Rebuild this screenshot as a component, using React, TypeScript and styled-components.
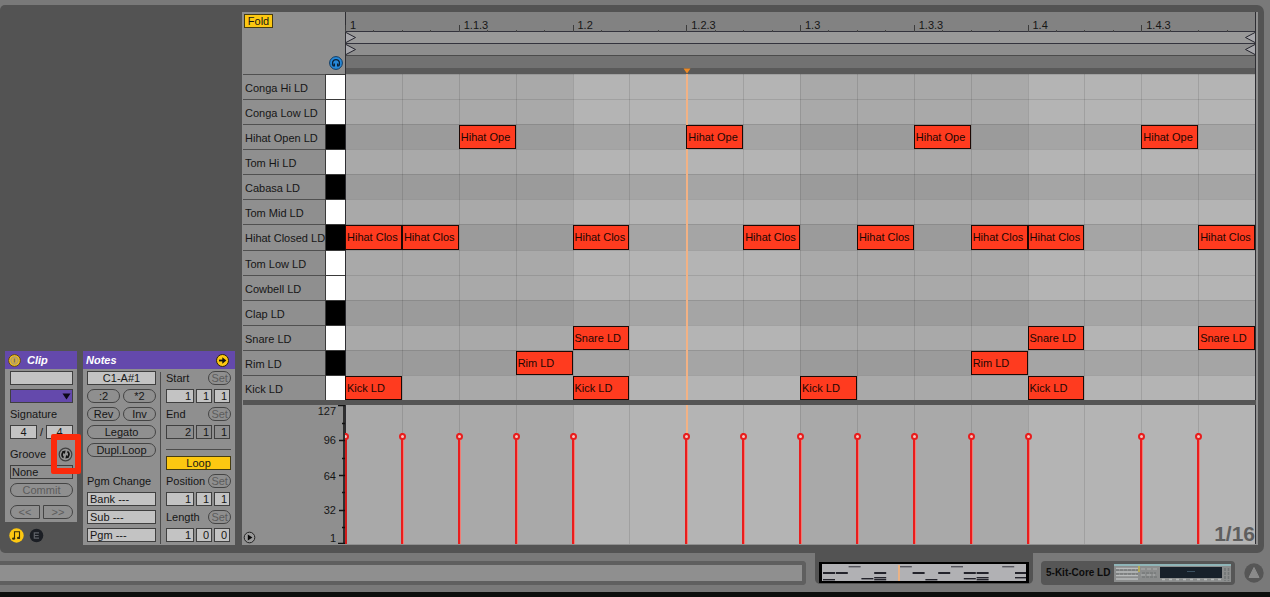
import React from 'react';
import styled, { createGlobalStyle } from 'styled-components';

const GlobalStyle = createGlobalStyle`
  *, *::before, *::after { box-sizing: border-box; }
  body {
    margin: 0;
    background: #0d0f0d;
    color: #161616;
    font: 11px/14px "Liberation Sans", Arial, sans-serif;
  }
  button, input, select { font: inherit; color: inherit; margin: 0; padding: 0; border-radius: 0; }
`;

const LANE_HEIGHT = 326;

const Page = styled.main`
  display: flex;
  flex-direction: column;
  min-width: 900px;
  min-height: 100vh;
  background: #0d0f0d;
`;

const Chassis = styled.div`
  background: #797979;
  padding-top: 5px;
`;

const Detail = styled.section`
  display: flex;
  align-items: flex-end;
  margin-right: 6px;
  padding: 7px 6px 8px 5px;
  background: #535353;
  border-radius: 5px 7px 7px 5px;
`;

/* ---------- clip and notes boxes ---------- */

const Sidebar = styled.aside`
  display: flex;
  flex: none;
  gap: 6px;
  margin-right: 7px;
`;

const ClipColumn = styled.div`
  width: 72px;
`;

const Box = styled.section`
  background: #8f8f8f;
  padding-bottom: 1px;
`;

const NotesBox = styled(Box)`
  width: 152px;
`;

const BoxHeader = styled.header`
  display: flex;
  align-items: center;
  gap: 6px;
  height: 18px;
  padding: 0 6px 0 3px;
  background: #6449ac;
  color: #fff;
`;

const BoxTitle = styled.h2`
  flex: 1;
  margin: 0;
  font-size: 11px;
  font-style: italic;
  font-weight: bold;
`;

const IconButton = styled.button`
  display: block;
  flex: none;
  border: 0;
  background: none;
  line-height: 0;
  svg { display: block; }
`;

const Fields = styled.div`
  padding: 0 4px 0 5px;
`;

const NotesBody = styled.div`
  display: grid;
  grid-template-columns: 69px 1fr;
  padding: 0 5px 0 4px;
`;

const LeftFields = styled.div``;

const RightFields = styled.div`
  margin: 3px 0 0 4px;
  padding-left: 5px;
  border-left: 1px solid #4c4c4c;
  & > :first-child { margin-top: -3px; }
`;

const Row = styled.div<{ $before?: number }>`
  position: relative;
  display: flex;
  align-items: center;
  justify-content: space-between;
  gap: 3px;
  height: 18px;
  margin-top: ${(p) => p.$before ?? 0}px;
`;

const Label = styled.label`
  white-space: nowrap;
`;

const Field = styled.input<{ $align?: string; $dim?: boolean; $w?: number }>`
  height: 14px;
  width: ${(p) => (p.$w ? `${p.$w}px` : '100%')};
  min-width: 0;
  padding: 0 2px;
  border: 1px solid #3f3f3f;
  background: ${(p) => (p.$dim ? '#8f8f8f' : '#c3c3c3')};
  text-align: ${(p) => p.$align ?? 'left'};
  outline: 0;
`;

const Triple = styled.div`
  display: grid;
  grid-template-columns: 28px 16px 16px;
  gap: 2px;
`;

const Pill = styled.button<{ $dim?: boolean; $shape?: string }>`
  flex: 1;
  height: 14px;
  border: 1px solid #444;
  border-radius: ${(p) => p.$shape ?? '7px'};
  background: #8f8f8f;
  color: ${(p) => (p.$dim ? '#5c5c5c' : '#161616')};
  line-height: 12px;
  text-align: center;
`;

const SetButton = styled(Pill)`
  flex: none;
  width: 23px;
`;

const ColorPicker = styled.div`
  position: relative;
  width: 100%;
  height: 14px;
  svg { position: absolute; top: 4px; right: 2px; pointer-events: none; }
`;

const Select = styled.select<{ $color?: string }>`
  display: block;
  width: 100%;
  height: 14px;
  appearance: none;
  border: 1px solid #3f3f3f;
  background: ${(p) => p.$color ?? '#8f8f8f'};
  padding: 0 1px;
  line-height: 12px;
  outline: 0;
`;

const Rule = styled.hr`
  height: 1px;
  margin: 8px 0 6px;
  border: 0;
  background: #4c4c4c;
`;

const YellowButton = styled.button`
  display: block;
  width: 100%;
  height: 14px;
  border: 1px solid #463c10;
  background: #fdc811;
  line-height: 12px;
  text-align: center;
`;

const Highlight = styled.div`
  position: absolute;
  z-index: 2;
  top: -11px;
  right: -8px;
  width: 30px;
  height: 40px;
  border: 6px solid #fb2a0b;
  border-radius: 2px;
  pointer-events: none;
`;

const Toggles = styled.div`
  display: flex;
  gap: 5px;
  padding: 6px 4px 1px;
`;

/* ---------- note editor ---------- */

const Editor = styled.section`
  flex: 1;
  min-width: 0;
  display: grid;
  grid-template-columns: 102px minmax(0, 1fr);
  padding: 0 2px 1px 1px;
  background: #8f8f8f;
`;

const EditorCorner = styled.div`
  display: flex;
  flex-direction: column;
  align-items: flex-end;
  justify-content: space-between;
  padding: 2px 2px 4px 1px;
`;

const FoldButton = styled(YellowButton)`
  width: 29px;
  align-self: flex-start;
`;

const Timeline = styled.div`
  border-left: 1px solid #2e2e33;
  border-right: 1px solid #2e2e33;
  background: #828282;
`;

const Ruler = styled.div`
  display: grid;
  grid-template-columns: repeat(8, 1fr);
  height: 19px;
  margin-left: -1px;
`;

const RulerMark = styled.div`
  position: relative;
  padding: 6px 0 0 5px;
  &::before {
    content: '';
    position: absolute;
    left: 0;
    bottom: 0;
    width: 1px;
    height: 7px;
    background: #3c3c3c;
  }
`;

const SmallTicks = styled.div`
  position: absolute;
  left: 0;
  right: 0;
  bottom: 0;
  height: 2px;
  display: grid;
  grid-template-columns: repeat(4, 1fr);
`;

const SmallTick = styled.i`
  border-left: 1px solid #444;
`;

const Lane = styled.div<{ $tone: string }>`
  display: flex;
  justify-content: space-between;
  height: 12px;
  border-top: 1px solid #33333d;
  background: ${(p) => p.$tone};
  svg { display: block; }
`;

const ScrubLane = styled.div`
  height: 19px;
  border-top: 1px solid #4b4b4b;
  border-bottom: 6px solid #5a5a5a;
  background: #727272;
`;

const Keys = styled.div`
  display: grid;
  grid-template-rows: repeat(13, minmax(0, 1fr));
  height: ${LANE_HEIGHT}px;
`;

const Key = styled.div`
  display: grid;
  grid-template-columns: 82px 20px;
`;

const KeyName = styled.span`
  padding: 6px 0 0 2px;
  border-top: 1px solid #505050;
  white-space: nowrap;
  overflow: hidden;
`;

const KeyCap = styled.span<{ $black: boolean }>`
  border: solid #3a3a3a;
  border-width: 1px 0 0 1px;
  background: ${(p) => (p.$black ? '#000' : '#fff')};
`;

const Columns = styled.div<{ $rows: number; $height: number }>`
  position: relative;
  display: grid;
  grid-template-columns: repeat(16, minmax(0, 1fr));
  grid-template-rows: repeat(${(p) => p.$rows}, minmax(0, 1fr));
  height: ${(p) => p.$height}px;
  border-right: 1px solid #2e2e33;
`;

const Step = styled.div<{ $col: number }>`
  grid-column: ${(p) => p.$col};
  grid-row: 1 / -1;
  border-left: 1px solid ${(p) => (p.$col === 1 ? '#2e2e33' : 'rgba(0, 0, 0, 0.11)')};
  background: ${(p) => (Math.floor((p.$col - 1) / 4) % 2 ? '#b4b4b4' : '#a9a9a9')};
`;

const RowShade = styled.div<{ $row: number; $dark: boolean }>`
  grid-column: 1 / -1;
  grid-row: ${(p) => p.$row};
  border-top: 1px solid rgba(0, 0, 0, 0.1);
  background: ${(p) => (p.$dark ? 'rgba(0, 0, 0, 0.08)' : 'transparent')};
`;

const Note = styled.div<{ $row: number; $col: number }>`
  grid-column: ${(p) => p.$col};
  grid-row: ${(p) => p.$row};
  margin: 1px 0 0;
  padding: 4px 0 0 1px;
  border: 1px solid #1c0804;
  background: #ff3b1f;
  color: #1d0703;
  white-space: nowrap;
  overflow: hidden;
  z-index: 1;
`;

const Playhead = styled.div`
  position: relative;
  grid-column: 7;
  grid-row: 1 / -1;
  width: 2px;
  background: #f2b285;
  svg { position: absolute; top: -6px; left: -3px; }
`;

const Divider = styled.div`
  grid-column: 1 / -1;
  height: 5px;
  background: #555;
`;

const Scale = styled.div`
  display: flex;
  align-items: flex-end;
  justify-content: space-between;
  height: 139px;
  & > svg { display: block; }
`;

const Stem = styled.div<{ $col: number }>`
  grid-column: ${(p) => p.$col};
  grid-row: 1;
  width: 7px;
  margin: 28px 0 0 -3px;
  background: linear-gradient(to right, transparent 2px, #e81d1d 2px, #e81d1d 4px, #f27c74 4px, #f27c74 5px, transparent 5px);
  z-index: 1;
  &::before {
    content: '';
    display: block;
    height: 7px;
    border: 2px solid #e81d1d;
    border-radius: 50%;
    background: #f3c6c0;
  }
`;

const FirstEdge = styled(Stem)`
  margin-left: 0;
  width: 4px;
  overflow: hidden;
  background: linear-gradient(to right, #d21b1b 2px, transparent 2px);
  &::before { width: 7px; margin-left: -3px; }
`;

const Quantize = styled.output`
  position: absolute;
  right: 0;
  bottom: 0;
  color: #5e5e5e;
  font-size: 21px;
  font-weight: bold;
  line-height: 20px;
  z-index: 2;
`;

/* ---------- bottom bar ---------- */

const BottomBar = styled.footer`
  display: flex;
  height: 39px;
  padding: 0 6px 8px 0;
  background: #797979;
`;

const Status = styled.div`
  flex: 1;
  height: 24px;
  margin: 8px 9px 0 0;
  border: solid #5f5f5f;
  border-width: 4px 4px 4px 0;
  border-radius: 0 4px 4px 0;
  background: #8f8f8f;
`;

const OverviewTab = styled.div`
  flex: none;
  width: 218px;
  padding: 9px 4px 0;
  background: #535353;
  border-radius: 0 0 5px 5px;
`;

const Overview = styled.button`
  display: block;
  width: 210px;
  height: 21px;
  border: 2px solid #000;
  background: #b1b1b4;
  svg { display: block; }
`;

const Device = styled.button`
  && { border-radius: 4px; padding: 0 4px 0 5px; }
  display: flex;
  align-items: center;
  justify-content: space-between;
  flex: none;
  width: 194px;
  height: 24px;
  margin: 8px 9px 0 8px;
  border: 0;
  background: #565656;
  color: #0c0c0c;
  font-size: 10px;
  font-weight: bold;
  white-space: nowrap;
`;

const ExpandButton = styled(IconButton)`
  margin-top: 10px;
  align-self: flex-start;
`;

const keys = [
  { name: 'Conga Hi LD', black: false, steps: [] },
  { name: 'Conga Low LD', black: false, steps: [] },
  { name: 'Hihat Open LD', black: true, text: 'Hihat Ope', steps: [3, 7, 11, 15] },
  { name: 'Tom Hi LD', black: false, steps: [] },
  { name: 'Cabasa LD', black: true, steps: [] },
  { name: 'Tom Mid LD', black: false, steps: [] },
  { name: 'Hihat Closed LD', black: true, text: 'Hihat Clos', steps: [1, 2, 5, 8, 10, 12, 13, 16] },
  { name: 'Tom Low LD', black: false, steps: [] },
  { name: 'Cowbell LD', black: false, steps: [] },
  { name: 'Clap LD', black: true, steps: [] },
  { name: 'Snare LD', black: false, text: 'Snare LD', steps: [5, 13, 16] },
  { name: 'Rim LD', black: true, text: 'Rim LD', steps: [4, 12] },
  { name: 'Kick LD', black: false, text: 'Kick LD', steps: [1, 5, 9, 13] },
] as { name: string; black: boolean; text?: string; steps: number[] }[];

const steps = Array.from({ length: 16 }, (_, i) => i + 1);
const velocities = steps.filter((s) => keys.some((k) => k.steps.includes(s)));
const bars = ['1', '1.1.3', '1.2', '1.2.3', '1.3', '1.3.3', '1.4', '1.4.3'];

const LoopMarker = ({ flip }: { flip?: boolean }) => (
  <svg width="11" height="11" viewBox="0 0 11 11" aria-hidden="true">
    <path
      d={flip ? 'M11 0.5 L1.5 5.5 L11 10.5' : 'M0 0.5 L9.5 5.5 L0 10.5'}
      fill="#a6a6aa"
      stroke="#25252e"
    />
  </svg>
);

const Position = ({ name, values, dim }: { name: string; values: string[]; dim?: boolean }) => (
  <>
    <Row>
      <Label htmlFor={name}>{name}</Label>
      <SetButton $dim>Set</SetButton>
    </Row>
    <Row>
      <Triple>
        {values.map((v, i) => (
          <Field
            key={i}
            id={i === 0 ? name : undefined}
            aria-label={i === 0 ? undefined : `${name} ${i + 1}`}
            defaultValue={v}
            $align="right"
            $dim={dim}
          />
        ))}
      </Triple>
    </Row>
  </>
);

const ClipBox = () => (
  <ClipColumn>
    <Box>
      <BoxHeader>
        <IconButton aria-label="Clip activator">
          <svg width="13" height="13" viewBox="0 0 13 13">
            <circle cx="6.5" cy="6.5" r="5.9" fill="#f3c11b" stroke="#5a431c" />
            <circle cx="6.5" cy="6.5" r="3.6" fill="#d8ae3a" stroke="#a99a72" strokeWidth="1.2" />
            <path d="M6.5 4.5v4" stroke="#777264" strokeWidth="1.4" />
          </svg>
        </IconButton>
        <BoxTitle>Clip</BoxTitle>
      </BoxHeader>
      <Fields>
        <Row>
          <Field aria-label="Clip name" defaultValue="" />
        </Row>
        <Row>
          <ColorPicker>
            <Select $color="#6449ac" aria-label="Clip color" />
            <svg width="9" height="7" viewBox="0 0 9 7" aria-hidden="true">
              <path d="M0.5 0.5h8L4.5 6.5z" fill="#0c0818" />
            </svg>
          </ColorPicker>
        </Row>
        <Row>
          <Label htmlFor="numerator">Signature</Label>
        </Row>
        <Row>
          <Field id="numerator" $w={28} $align="center" defaultValue="4" />
          <span>/</span>
          <Field aria-label="Signature denominator" $w={28} $align="center" defaultValue="4" />
        </Row>
        <Row $before={4}>
          <Label htmlFor="groove">Groove</Label>
          <IconButton aria-label="Hot-swap groove">
            <svg width="15" height="15" viewBox="0 0 15 15">
              <circle cx="7.5" cy="7.5" r="6.3" fill="#939393" stroke="#3f3f3f" strokeWidth="1.2" />
              <path d="M5.6 10.6C3.6 9.4 3.4 6.6 5.4 5" fill="none" stroke="#111" strokeWidth="1.7" />
              <path d="M9.4 4.4C11.4 5.600 11.600 8.400 9.600 10" fill="none" stroke="#111" strokeWidth="1.7" />
              <path d="M4 4.200L7.600 3.600L6.800 7z M11 10.800L7.400 11.400L8.200 8z" fill="#111" />
            </svg>
          </IconButton>
          <Highlight />
        </Row>
        <Row>
          <Select id="groove">
            <option>None</option>
          </Select>
        </Row>
        <Row>
          <Pill $dim>Commit</Pill>
        </Row>
        <Row $before={4}>
          <Pill $dim $shape="7px 0 0 7px">&lt;&lt;</Pill>
          <Pill $dim $shape="0 7px 7px 0">&gt;&gt;</Pill>
        </Row>
      </Fields>
    </Box>
    <Toggles>
      <IconButton aria-label="Show notes box">
        <svg width="15" height="15" viewBox="0 0 15 15">
          <circle cx="7.5" cy="7.5" r="7.2" fill="#fdc811" />
          <path d="M5.5 10.5V3.8h5v6" fill="none" stroke="#3a2f0a" strokeWidth="1.1" />
          <ellipse cx="4.6" cy="10.6" rx="1.6" ry="1.2" fill="#3a2f0a" />
          <ellipse cx="9.6" cy="9.9" rx="1.6" ry="1.2" fill="#3a2f0a" />
        </svg>
      </IconButton>
      <IconButton aria-label="Show envelopes box">
        <svg width="15" height="15" viewBox="0 0 15 15">
          <circle cx="7.5" cy="7.5" r="6.8" fill="#1b1e24" />
          <path d="M10 4.8H5.3v5.4H10M5.3 7.5h4.3" fill="none" stroke="#5f6268" strokeWidth="1.2" />
        </svg>
      </IconButton>
    </Toggles>
  </ClipColumn>
);

const NotesPanel = () => (
  <NotesBox>
    <BoxHeader>
      <BoxTitle>Notes</BoxTitle>
      <IconButton aria-label="Expand notes box">
        <svg width="13" height="13" viewBox="0 0 13 13">
          <circle cx="6.5" cy="6.5" r="6" fill="#fdc811" stroke="#2c220a" />
          <path d="M3 6.5h4" stroke="#111" strokeWidth="1.8" />
          <path d="M6.3 3.2l4 3.3l-4 3.3z" fill="#111" />
        </svg>
      </IconButton>
    </BoxHeader>
    <NotesBody>
      <LeftFields>
        <Row>
          <Field aria-label="Note range" defaultValue="C1-A#1" $align="center" />
        </Row>
        <Row>
          <Pill>:2</Pill>
          <Pill>*2</Pill>
        </Row>
        <Row>
          <Pill>Rev</Pill>
          <Pill>Inv</Pill>
        </Row>
        <Row>
          <Pill>Legato</Pill>
        </Row>
        <Row>
          <Pill>Dupl.Loop</Pill>
        </Row>
        <Row $before={13}>
          <Label htmlFor="bank">Pgm Change</Label>
        </Row>
        {['Bank', 'Sub', 'Pgm'].map((n) => (
          <Row key={n}>
            <Field id={n.toLowerCase()} aria-label={n} defaultValue={`${n} ---`} />
          </Row>
        ))}
      </LeftFields>
      <RightFields>
        <Position name="Start" values={['1', '1', '1']} />
        <Position name="End" values={['2', '1', '1']} dim />
        <Rule />
        <YellowButton>Loop</YellowButton>
        <Row $before={2}>
          <Label htmlFor="loop-position">Position</Label>
          <SetButton $dim>Set</SetButton>
        </Row>
        <Row>
          <Triple>
            <Field id="loop-position" defaultValue="1" $align="right" />
            <Field aria-label="Position beat" defaultValue="1" $align="right" />
            <Field aria-label="Position sixteenth" defaultValue="1" $align="right" />
          </Triple>
        </Row>
        <Position name="Length" values={['1', '0', '0']} />
      </RightFields>
    </NotesBody>
  </NotesBox>
);

const VelocityScale = () => (
  <Scale>
    <IconButton aria-label="Preview velocity">
      <svg width="13" height="13" viewBox="0 0 13 13">
        <circle cx="6.5" cy="6.5" r="5.3" fill="#999" stroke="#222" />
        <path d="M4.8 3.5v6l4.6-3z" fill="#080808" />
      </svg>
    </IconButton>
    <svg width="40" height="139" viewBox="0 0 40 139" fill="#161616" fontSize="11">
      <path
        d="M39 0V139M33 0.5H40M34 35.5H40M34 70.5H40M34 105.5H40M33 138.5H40M37 18.5H40M37 53.5H40M37 87.5H40M37 122.5H40"
        stroke="#111"
        strokeWidth="1.5"
      />
      {[['127', 10], ['96', 39], ['64', 75], ['32', 109], ['1', 137]].map(([t, y]) => (
        <text key={t} x="31" y={y} textAnchor="end">
          {t}
        </text>
      ))}
    </svg>
  </Scale>
);

const NoteEditor = () => (
  <Editor>
    <EditorCorner>
      <FoldButton>Fold</FoldButton>
      <IconButton aria-label="Preview notes">
        <svg width="14" height="14" viewBox="0 0 14 14">
          <circle cx="7" cy="7" r="6.4" fill="#2688d8" stroke="#123c63" />
          <path d="M4.6 10.2C2.6 8.200 3.2 3.700 7 3.700S11.400 8.200 9.400 10.200" fill="none" stroke="#0b2038" strokeWidth="1.3" />
          <path d="M5.300 7.400v3.200M8.700 7.400v3.200" stroke="#0b2038" strokeWidth="1.4" />
        </svg>
      </IconButton>
    </EditorCorner>
    <Timeline>
      <Ruler>
        {bars.map((b) => (
          <RulerMark key={b}>
            {b}
            <SmallTicks>
              {[0, 1, 2, 3].map((t) => (
                <SmallTick key={t} />
              ))}
            </SmallTicks>
          </RulerMark>
        ))}
      </Ruler>
      <Lane $tone="#999">
        <LoopMarker />
        <LoopMarker flip />
      </Lane>
      <Lane $tone="#8e8e8e">
        <LoopMarker />
        <LoopMarker flip />
      </Lane>
      <ScrubLane />
    </Timeline>

    <Keys>
      {keys.map((k) => (
        <Key key={k.name}>
          <KeyName>{k.name}</KeyName>
          <KeyCap $black={k.black} />
        </Key>
      ))}
    </Keys>
    <Columns $rows={13} $height={LANE_HEIGHT}>
      {steps.map((s) => (
        <Step key={s} $col={s} />
      ))}
      {keys.map((k, i) => (
        <RowShade key={k.name} $row={i + 1} $dark={k.black} />
      ))}
      <Playhead>
        <svg width="8" height="6" viewBox="0 0 8 6" aria-hidden="true">
          <path d="M0.5 0.5h7L4 5.5z" fill="#f08a22" />
        </svg>
      </Playhead>
      {keys.flatMap((k, i) =>
        k.steps.map((s) => (
          <Note key={`${i}-${s}`} $row={i + 1} $col={s}>
            {k.text}
          </Note>
        )),
      )}
    </Columns>

    <Divider />

    <VelocityScale />
    <Columns $rows={1} $height={139}>
      {steps.map((s) => (
        <Step key={s} $col={s} />
      ))}
      <Playhead />
      {velocities.map((s) => (s === 1 ? <FirstEdge key={s} $col={s} /> : <Stem key={s} $col={s} />))}
      <Quantize>1/16</Quantize>
    </Columns>
  </Editor>
);

const overviewRows: Record<number, number> = { 2: 2, 6: 8, 10: 13, 11: 14, 12: 15 };

const OverviewMap = () => (
  <svg width="206" height="17" viewBox="0 0 206 17" aria-hidden="true">
    {keys.flatMap((k, i) =>
      k.steps.map((s) => (
        <rect
          key={`${i}-${s}`}
          x={2 + (s - 1) * 12.8}
          y={overviewRows[i]}
          width="12"
          height={i === 6 ? 2 : 1.4}
          fill={i === 2 ? '#55555c' : '#23232b'}
        />
      )),
    )}
    <path d="M78 1v16" stroke="#eab285" strokeWidth="2" />
    <path d="M0.500 0v17M205.500 0v17" stroke="#000" />
  </svg>
);

const DeviceThumb = () => (
  <svg width="117" height="18" viewBox="0 0 117 18" aria-hidden="true">
    <rect width="117" height="18" fill="#8b8d8d" />
    <path d="M0 1h117" stroke="#8fb5b8" strokeWidth="2" />
    <path d="M2 4.5h22M2 8h22M2 11.5h22M2 15h22" stroke="#b9bcbc" strokeWidth="1.5" />
    <path d="M2 6h22M2 10h22M28 9h14M28 13h16" stroke="#6d7070" strokeDasharray="3 1" />
    <path d="M27 5h17M27 11h14" stroke="#adb0b0" strokeDasharray="4 2" />
    <path d="M25 2v6" stroke="#c0b548" strokeWidth="1.5" />
    <path d="M48 15.5h62" stroke="#b5b8b8" strokeDasharray="3 4" strokeWidth="1.5" />
    <path d="M111 4v13M114.5 4v13" stroke="#727676" strokeDasharray="3 1" strokeWidth="1.5" />
    <rect x="46" y="3" width="62" height="11" fill="#17202a" />
    <path d="M73 7.5h8" stroke="#3b5060" />
  </svg>
);

export default function App() {
  return (
    <Page>
      <GlobalStyle />
      <Chassis>
        <Detail>
          <Sidebar>
            <ClipBox />
            <NotesPanel />
          </Sidebar>
          <NoteEditor />
        </Detail>
        <BottomBar>
          <Status role="status" />
          <OverviewTab>
            <Overview aria-label="Clip overview">
              <OverviewMap />
            </Overview>
          </OverviewTab>
          <Device>
            5-Kit-Core LD
            <DeviceThumb />
          </Device>
          <ExpandButton aria-label="Show device view">
            <svg width="20" height="20" viewBox="0 0 20 20">
              <circle cx="10" cy="10" r="9.7" fill="#565656" />
              <path d="M10 4.5l5 10H5z" fill="#8a8a8a" stroke="#8a8a8a" strokeLinejoin="round" />
            </svg>
          </ExpandButton>
        </BottomBar>
      </Chassis>
    </Page>
  );
}
